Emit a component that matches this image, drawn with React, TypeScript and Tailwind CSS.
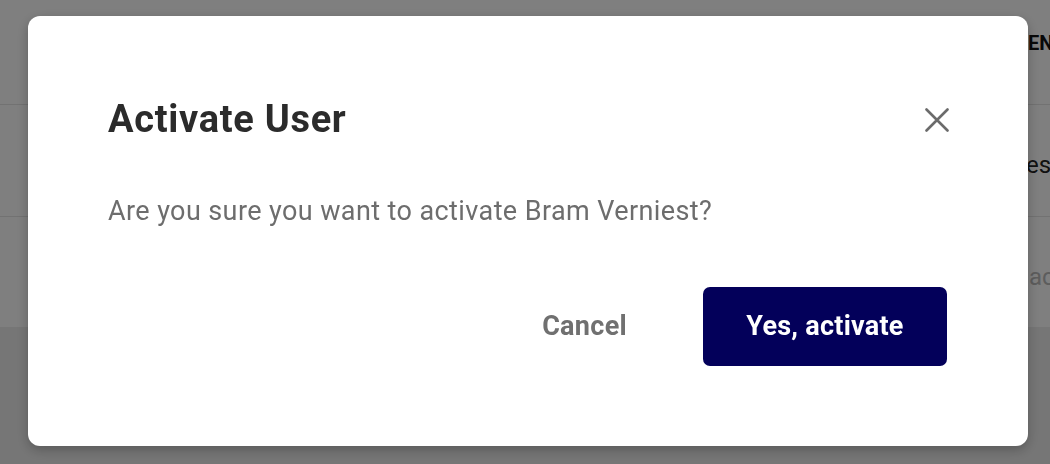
const font = { fontFamily: 'Roboto, "Liberation Sans", sans-serif' };

function BackgroundPage() {
  return (
    <div className="w-[1050px] h-[464px] bg-white overflow-hidden" style={font}>
      <div className="h-[105px] border-b border-[#e4e4e4] pl-[1028px] pt-[28px] whitespace-nowrap text-[20px] font-bold text-[#111]">
        EN
      </div>
      <div className="h-[112px] border-b border-[#e4e4e4] pl-[1026px] pt-[42px] whitespace-nowrap text-[24px] text-[#222]">
        es
      </div>
      <div className="h-[110px] pl-[1029px] pt-[42px] whitespace-nowrap text-[24px] text-[#bbb]">
        ac
      </div>
      <div className="h-[137px] bg-[#ededed]" />
    </div>
  );
}

export default function App() {
  return (
    <div className="relative w-[1050px] h-[464px]">
      <BackgroundPage />
      <div className="fixed inset-0 bg-black/50 flex items-start pl-[28px] pt-[16px]" style={font}>
        <div className="w-[1000px] h-[430px] bg-white rounded-[12px] shadow-[0_4px_12px_rgba(0,0,0,0.25)] px-[80px] pt-[80px] flex flex-col">
          <div className="flex items-center justify-between">
            <h2 className="text-[38px] leading-[47px] tracking-[0.7px] font-bold text-[#2b2b2b]">Activate User</h2>
            <button className="text-[#6b6b6b] mr-[-1px]">
              <svg width="24" height="24" viewBox="0 0 24 24" fill="none" stroke="currentColor" strokeWidth="2.6" strokeLinecap="round">
                <path d="M1.5 1.5 22.5 22.5M22.5 1.5 1.5 22.5" />
              </svg>
            </button>
          </div>
          <p className="mt-[52px] text-[27px] leading-[32px] tracking-[0.4px] text-[#6d6d6d]">
            Are you sure you want to activate Bram Verniest?
          </p>
          <div className="mt-[60px] flex items-center justify-end gap-[76px] pr-[1px]">
            <button className="text-[27px] tracking-[0.3px] font-bold text-[#707070]">Cancel</button>
            <button className="w-[244px] h-[79px] rounded-[7px] bg-[#03005a] text-white text-[27px] tracking-[0.25px] font-bold">
              Yes, activate
            </button>
          </div>
        </div>
      </div>
    </div>
  );
}
